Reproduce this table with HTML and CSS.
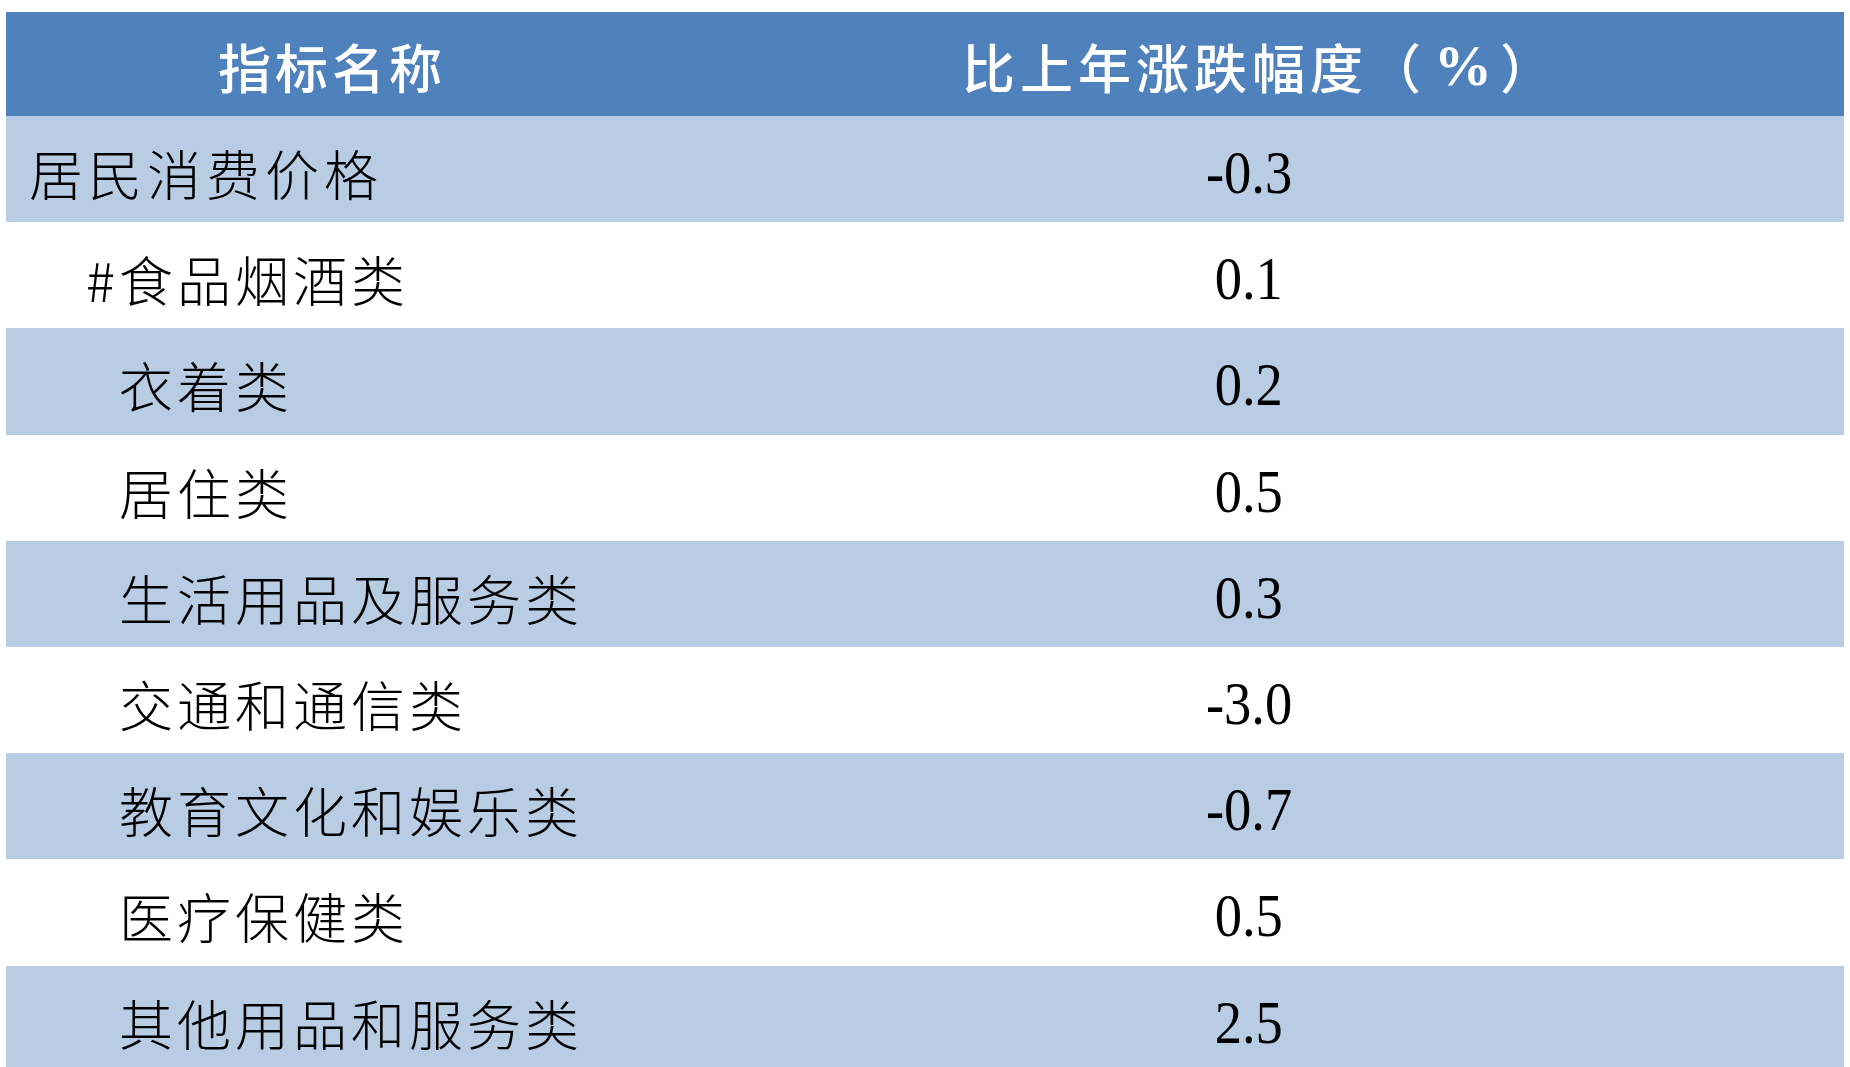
FILE: index.html
```html
<!DOCTYPE html>
<html lang="zh-CN">
<head>
<meta charset="utf-8">
<title>居民消费价格比上年涨跌幅度</title>
<link rel="stylesheet" href="styles.css">
</head>
<body>
<div class="page">
  <div class="table">
    <div class="cell head name">指标名称</div>
    <div class="cell head val">比上年涨跌幅度（<span class="pct">%</span>）</div>

    <div class="cell name alt top">居民消费价格</div>
    <div class="cell val alt"><span class="num">-0.3</span></div>

    <div class="cell name sub hash">#食品烟酒类</div>
    <div class="cell val"><span class="num">0.1</span></div>

    <div class="cell name alt sub">衣着类</div>
    <div class="cell val alt"><span class="num">0.2</span></div>

    <div class="cell name sub">居住类</div>
    <div class="cell val"><span class="num">0.5</span></div>

    <div class="cell name alt sub">生活用品及服务类</div>
    <div class="cell val alt"><span class="num">0.3</span></div>

    <div class="cell name sub">交通和通信类</div>
    <div class="cell val"><span class="num">-3.0</span></div>

    <div class="cell name alt sub">教育文化和娱乐类</div>
    <div class="cell val alt"><span class="num">-0.7</span></div>

    <div class="cell name sub">医疗保健类</div>
    <div class="cell val"><span class="num">0.5</span></div>

    <div class="cell name alt sub">其他用品和服务类</div>
    <div class="cell val alt"><span class="num">2.5</span></div>
  </div>
</div>
</body>
</html>
```

FILE: styles.css
```css
html, body {
  margin: 0;
  padding: 0;
  background: #ffffff;
  overflow: hidden;
}

.page {
  padding: 12px 6px 0 6px;
}

.table {
  display: grid;
  grid-template-columns: 648px 1fr;
  grid-template-rows: 104px repeat(9, 106.2px);
}

.cell {
  display: flex;
  align-items: center;
  font-family: "Noto Sans CJK SC", "Noto Sans", sans-serif;
  font-weight: 300;
  font-size: 54px;
  letter-spacing: 4px;
  color: #000000;
  background: #ffffff;
  padding-top: 7px;
  box-sizing: border-box;
  white-space: nowrap;
}

.cell.alt {
  background: #b8cce4;
}

.cell.head {
  background: #4f81bd;
  color: #ffffff;
  font-weight: 500;
  font-size: 53px;
  letter-spacing: 4px;
  justify-content: center;
  padding-top: 3px;
}

.cell.head.name {
  padding-left: 4px;
}

.cell.head.val {
  padding-left: 22px;
  letter-spacing: 5px;
}

.pct {
  font-family: "Liberation Serif", serif;
  font-weight: 700;
  font-size: 58px;
  letter-spacing: 0;
  margin: 0 8px;
}

.cell.name {
  padding-left: 23px;
}

.cell.name.top {
  letter-spacing: 5px;
}

.cell.name.sub {
  padding-left: 113px;
}

.cell.name.hash {
  padding-left: 80px;
}

.cell.val {
  justify-content: center;
}

.num {
  display: inline-block;
  font-family: "Liberation Serif", "Times New Roman", serif;
  font-weight: 400;
  font-size: 62px;
  letter-spacing: 0;
  transform: scaleX(0.88);
}
```
